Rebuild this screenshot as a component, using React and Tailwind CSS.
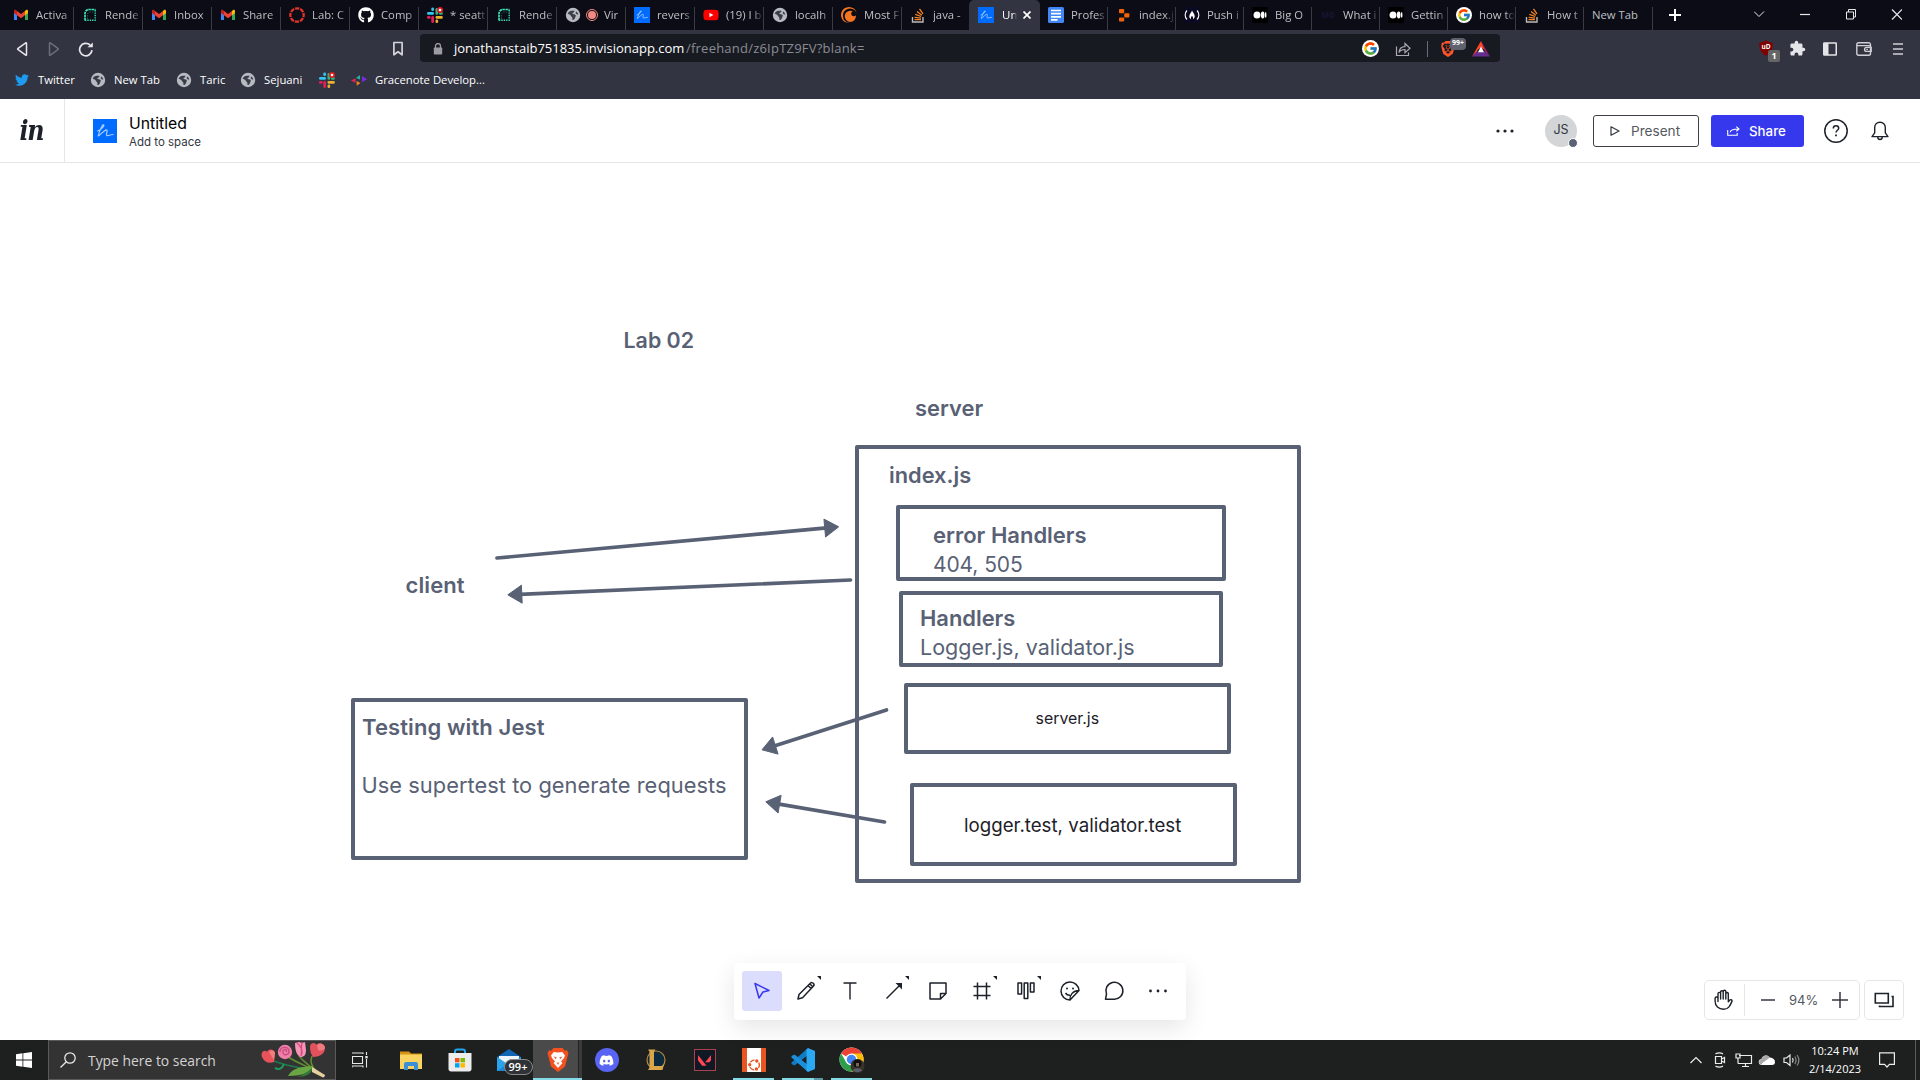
import { FaGithub, FaTwitter, FaDiscord, FaYoutube } from "react-icons/fa";
import { MdExtension } from "react-icons/md";
import { FcGoogle } from "react-icons/fc";
import { SiCrunchyroll, SiBrave, SiUbuntu, SiValorant } from "react-icons/si";

/* ---------- favicons ---------- */

function Gmail() {
  return (
    <svg viewBox="0 0 16 16" className="size-4">
      <path d="M1 4.2V13h3V7z" fill="#4285f4" />
      <path d="M15 4.2V13h-3V7z" fill="#34a853" />
      <path d="M1 4.2V6l3 2.3V4L3 3.1C2 2.500 1 3.100 1 4.200z" fill="#c5221f" />
      <path d="M12 4v4.300L15 6V4.200c0-1.100-1-1.700-2-1.100z" fill="#fbbc04" />
      <path d="M4 4l4 3 4-3v4.300l-4 3-4-3z" fill="#ea4335" />
    </svg>
  );
}

function RenderIcon() {
  return (
    <svg viewBox="0 0 16 16" className="size-4" fill="none">
      <path d="M3 13.500V6.500a4 4 0 0 1 4-4h6.500" stroke="#3fe0b0" strokeWidth="1.700" strokeDasharray="2.600 0.500" />
      <path d="M13.200 3v10.300H3" stroke="#3fe0b0" strokeWidth="1.400" strokeDasharray="1.400 1" />
      <path d="M5.500 12V7.500a2.500 2.500 0 0 1 2.500-2.500h3.500" stroke="#17564e" strokeWidth="1" strokeDasharray="1.500 1" />
    </svg>
  );
}

function CanvasIcon() {
  return (
    <svg viewBox="0 0 16 16" className="size-4" fill="none">
      <circle cx="8" cy="8" r="6.700" stroke="#e0352b" strokeWidth="2.300" strokeDasharray="4.260 1" strokeDashoffset="2.130" />
    </svg>
  );
}

function Slack() {
  return (
    <svg viewBox="0 0 16 16" className="size-4">
      <rect x="0" y="5" width="7" height="2.800" rx="1.400" fill="#36c5f0" />
      <rect x="4.300" y="0.500" width="2.700" height="3.600" rx="1.300" fill="#36c5f0" />
      <rect x="8.500" y="1" width="2.700" height="6.800" rx="1.300" fill="#2eb67d" />
      <rect x="12" y="5" width="3.800" height="2.800" rx="1.300" fill="#2eb67d" />
      <rect x="8.500" y="9" width="7.300" height="2.700" rx="1.300" fill="#ecb22e" />
      <rect x="8.500" y="12.500" width="2.700" height="3.500" rx="1.300" fill="#ecb22e" />
      <rect x="4.300" y="9" width="2.700" height="7" rx="1.300" fill="#e01e5a" />
      <rect x="0" y="9" width="3.600" height="2.700" rx="1.300" fill="#e01e5a" />
      <circle cx="13" cy="3" r="3" fill="#e3191e" />
      <circle cx="13" cy="3" r="1.300" fill="#fff" />
    </svg>
  );
}

function Globe() {
  return (
    <svg viewBox="0 0 16 16" className="size-4">
      <circle cx="8" cy="8" r="7.200" fill="#b7bac0" />
      <path d="M2.800 6.300C4.500 3.600 7 3.800 9.300 3.800c.4 1.500-1 2-1.800 2.100C7 7 8.500 7 9.800 7.400c1.800.5.700 2.100.4 3-.5 1.300-1.300 2.600-2.700 2.600-.3-1.300.200-2.200-.7-3C5.600 9 6 8.300 4.600 7.500c-.7-.4-1.800-.1-1.800-1.200z" fill="#3a3d49" />
      <path d="M11 4.600c1.200.5 2 1.700 2.300 2.900-1 .2-2-.4-2.600-1.300z" fill="#3a3d49" />
    </svg>
  );
}

function InvisionIcon({ className = "size-4" }) {
  return (
    <svg viewBox="0 0 24 24" className={className} fill="none">
      <rect width="24" height="24" fill="#006cff" />
      <path d="M4.200 11.500M10.900 6.200c0-.9-1.300-.4-2 1C7.700 9.500 5.700 14 5.200 17M4.500 12C7.500 11 10.800 8 10.900 6.200M5.200 17c2-.5 5.500-6 8.300-6.200 1.900.1-1 4.600.3 5.600 1.400.8 3-.9 6.400-.9" stroke="#a9cdff" strokeWidth="1.200" strokeLinecap="round" />
    </svg>
  );
}

function StackOverflow() {
  return (
    <svg viewBox="0 0 16 16" className="size-4" fill="none">
      <path d="M2.500 10v5h10.500v-5" stroke="#bcbbbb" strokeWidth="1.400" />
      <path d="M4.500 12.700h6.500M4.600 10.300l6.400.9M5.300 7.300l5.900 2.200M7 4.400l4.900 3.800M9.500 1.800l3.500 5.100" stroke="#f48024" strokeWidth="1.300" />
    </svg>
  );
}

function Docs() {
  return (
    <svg viewBox="0 0 16 16" className="size-4">
      <rect width="16" height="16" rx="1.500" fill="#4285f4" />
      <path d="M3 3.500h10M3 6.700h10M3 9.900h10M3 12.800h6.500" stroke="#fff" strokeWidth="1.700" />
    </svg>
  );
}

function Replit() {
  return (
    <svg viewBox="0 0 16 16" className="size-4" fill="#f26207">
      <rect x="3" y="2" width="5.200" height="4.200" rx="0.800" />
      <rect x="8.200" y="6.200" width="5.200" height="4.200" rx="0.800" />
      <rect x="3" y="10.400" width="5.200" height="4.200" rx="0.800" />
    </svg>
  );
}

function FreeCodeCamp() {
  return (
    <svg viewBox="0 0 16 16" className="size-4">
      <rect width="16" height="16" rx="2" fill="#0a0a23" />
      <path d="M3 3.500C.5 6 .5 10 3 12.500M13 3.500c2.500 2.500 2.500 6.500 0 9" stroke="#fff" strokeWidth="1.100" fill="none" />
      <path d="M8 3.500c.5 1.700 2.700 3.200 2.700 5.700 0 1.300-.8 2.500-1.700 3 .3-1.200.2-2-1-3.400-1.200 1.400-1.300 2.200-1 3.400-.9-.5-1.700-1.700-1.700-3C5.300 7 7.500 5.500 8 3.500z" fill="#fff" />
    </svg>
  );
}

function Medium() {
  return (
    <svg viewBox="0 0 16 16" className="size-4">
      <rect width="16" height="16" rx="1" fill="#000" />
      <circle cx="5" cy="8" r="3.500" fill="#fff" />
      <ellipse cx="10.700" cy="8" rx="1.800" ry="3.400" fill="#fff" />
      <ellipse cx="13.700" cy="8" rx="0.800" ry="3" fill="#fff" />
    </svg>
  );
}

function DimIcon() {
  return (
    <div className="flex size-4 items-center justify-center text-[8px] font-bold text-[#161634]">MG</div>
  );
}

function GoogleDisc() {
  return (
    <div className="flex size-4 items-center justify-center rounded-full bg-white">
      <FcGoogle className="size-[14px]" />
    </div>
  );
}

function Youtube() {
  return (
    <div className="relative flex size-4 items-center justify-center">
      <div className="absolute h-[6px] w-[6px] bg-white" />
      <FaYoutube className="relative size-4 text-[#ff0000]" />
    </div>
  );
}

/* ---------- tab strip ---------- */

const tabs = [
  [<Gmail />, "Activa"],
  [<RenderIcon />, "Rende"],
  [<Gmail />, "Inbox"],
  [<Gmail />, "Share"],
  [<CanvasIcon />, "Lab: C"],
  [<FaGithub className="size-4 text-white" />, "Comp"],
  [<Slack />, "* seatt"],
  [<RenderIcon />, "Rende"],
  [<Globe />, "Vir", true],
  [<InvisionIcon />, "revers"],
  [<Youtube />, "(19) I b"],
  [<Globe />, "localh"],
  [<SiCrunchyroll className="size-4 text-[#f47521]" />, "Most F"],
  [<StackOverflow />, "java -"],
];

const tabsAfter = [
  [<Docs />, "Profes"],
  [<Replit />, "index.j"],
  [<FreeCodeCamp />, "Push i"],
  [<Medium />, "Big O"],
  [<DimIcon />, "What i"],
  [<Medium />, "Gettin"],
  [<GoogleDisc />, "how to"],
  [<StackOverflow />, "How t"],
];

const fade = "overflow-hidden whitespace-pre [mask-image:linear-gradient(to_right,black_72%,transparent)]";

function Tab({ icon, title, width, rec }) {
  return (
    <div className={`${width} flex h-[23px] shrink-0 items-center border-r pb-[7px] pl-2`}>
      <div className="shrink-0">{icon}</div>
      {rec && (
        <div className="ml-[5px] flex size-3 shrink-0 items-center justify-center rounded-full border border-[#f28b82]">
          <div className="size-2 rounded-full bg-[#f28b82]" />
        </div>
      )}
      <div className={`${rec ? "ml-[6px]" : "ml-[7px]"} ${fade} w-full text-[11.300px] leading-4 text-[#bfc0c4]`}>{title}</div>
    </div>
  );
}

function TabStrip() {
  return (
    <div className="flex h-[30px] items-end bg-[#0b0c15] pl-[5px]">
      {tabs.map(([icon, title, rec], i) => (
        <Tab key={i} icon={icon} title={title} rec={rec} width={i === 13 ? "w-[67px] border-transparent" : "w-[69px] border-[#3b3c43]"} />
      ))}
      <div className="flex h-[30px] w-[71px] items-center rounded-t-[5px] bg-[#323442] pl-[9px]">
        <InvisionIcon />
        <div className={`${fade} ml-2 w-[15px] text-[11.500px] leading-4 text-white`}>Un</div>
        <svg viewBox="0 0 8 8" className="ml-[6px] size-2" stroke="#fff" strokeWidth="1.700"><path d="M.5.5l7 7M7.500.5l-7 7" /></svg>
      </div>
      {tabsAfter.map(([icon, title], i) => (
        <Tab key={i} icon={icon} title={title} width="w-[68px] border-[#3b3c43]" />
      ))}
      <div className="flex h-[23px] w-[69px] items-center border-r border-[#3b3c43] pb-[7px] pl-2 text-[11.300px] text-[#bfc0c4]">New Tab</div>
      <svg viewBox="0 0 12 12" className="mb-[9px] ml-[16px] size-3" stroke="#fff" strokeWidth="2"><path d="M6 0v12M0 6h12" /></svg>
      <svg viewBox="0 0 148 12" className="mb-[10px] ml-[73px] h-3 w-[148px]" fill="none" stroke="#e8e8ea" strokeWidth="1.200">
        <path d="M0 3.500l5 5 5-5" strokeWidth="1" />
        <path d="M46 6.500h10" />
        <path d="M92.500 4h7v7h-7zM94.500 4V1.500h7V9H99.500" strokeWidth="1" />
        <path d="M138 1.500l10 10M148 1.500l-10 10" />
      </svg>
    </div>
  );
}

/* ---------- navigation ---------- */

function Shield() {
  return (
    <div className="relative h-[22px] w-[22px]">
      <svg viewBox="0 0 16 16" className="size-4"><path d="M8 .3l2 1.200L14.700 3c.2 6-1.200 9.500-6.700 12.700C2.500 12.500 1.100 9 1.300 3L6 1.500z" fill="#800000" /></svg>
      <div className="absolute left-0 top-[3px] w-4 text-center text-[6.500px] font-bold leading-[8px] text-white">uD</div>
      <div className="absolute left-[10px] top-[10px] flex h-3 w-3 items-center justify-center rounded-[2px] bg-[#666] text-[9px] font-bold text-white">1</div>
    </div>
  );
}

function NavBar() {
  return (
    <div className="flex h-9 items-center bg-[#323442] pt-px">
      <svg viewBox="0 0 80 16" className="ml-[16px] h-4 w-20" fill="none" strokeWidth="1.500" strokeLinejoin="round">
        <path d="M10.500 2.200v11.600c0 .5-.5.5-.8.300L1.800 8.400a.5.5 0 0 1 0-.8l7.900-5.700c.3-.2.8-.2.8.3z" stroke="#e6e7ea" />
        <path d="M33.500 2.200v11.600c0 .5.5.5.8.300l7.900-5.700a.5.5 0 0 0 0-.8l-7.900-5.700c-.3-.2-.8-.2-.8.300z" stroke="#6c6e79" />
        <path d="M74 4a6.200 6.200 0 1 0 2 5.200" stroke="#e6e7ea" strokeWidth="1.700" />
        <path d="M71.500 6.300h5.300V1.400z" fill="#e6e7ea" />
      </svg>
      <svg viewBox="0 0 12 16" className="ml-[296px] h-4 w-3" fill="none" stroke="#d3d4d9" strokeWidth="1.700"><path d="M1.900 1.500h8.200v12.300L6 10.700l-4.100 3.100z" strokeLinejoin="round" /></svg>
      <div className="-mt-px ml-[16px] flex h-7 w-[1080px] items-center rounded-[4px] bg-[#181a21] pt-px text-[13px]">
        <svg viewBox="0 0 10 12" className="ml-[13px] h-3 w-[10px]"><rect x="0.800" y="4.500" width="8.400" height="7" rx="0.800" fill="#9b9ca3" /><path d="M2.500 5V3a2.500 2.500 0 0 1 5 0v2" stroke="#9b9ca3" strokeWidth="1.300" fill="none" /></svg>
        <div className="ml-[11px] w-[232px] whitespace-nowrap text-white">jonathanstaib751835.invisionapp.com</div>
        <div className="w-[676px] whitespace-nowrap tracking-[0.22px] text-[#8b8d94]">/freehand/z6IpTZ9FV?blank=</div>
        <div className="flex size-[17px] shrink-0 items-center justify-center rounded-full bg-white"><FcGoogle className="size-[15px]" /></div>
        <svg viewBox="0 0 16 16" className="ml-[16px] size-4" fill="none" stroke="#a9abb1" strokeWidth="1.200"><path d="M1.500 5.500v9h12v-3M4 11.500C4.500 7 7 5.700 10 5.700V2.500l5 4.700-5 4.500V8.500c-2.500 0-4.500.5-6 3z" /></svg>
        <div className="ml-[16px] h-4 w-px bg-[#6a6c75]" />
        <div className="relative ml-[12px] flex h-4 w-[14px] items-center">
          <SiBrave className="h-[18px] w-[16px] shrink-0 text-[#fb542b]" />
          <div className="absolute -top-[3px] left-[10px] flex h-3 w-4 items-center justify-center rounded-[4px] bg-[#5f626e] text-[7px] font-bold text-white">99+</div>
        </div>
        <svg viewBox="0 0 18 16" className="ml-[18px] h-4 w-[18px]"><path d="M9 0l4.500 9.500-4.500-3-4.500 3z" fill="#ff4724" /><path d="M9 0L0 15.500l5-5z" fill="#ff4724" /><path d="M9 0l9 15.500-5-5z" fill="#9e1f63" /><path d="M0 15.500h18l-5-5H5z" fill="#662d91" /><path d="M9 5.500l3 5.700H6z" fill="#fff" /></svg>
      </div>
      <div className="mt-[4px] ml-[258px]"><Shield /></div>
      <MdExtension className="ml-[9px] size-[17px] text-[#e4e5e8]" />
      <svg viewBox="0 0 14 14" className="ml-[17px] size-[14px]"><rect x="0.750" y="1" width="12.500" height="12" fill="none" stroke="#e4e5e8" strokeWidth="1.500" rx="0.500" /><rect x="1" y="1" width="4.500" height="12" fill="#e4e5e8" /></svg>
      <svg viewBox="0 0 16 14" className="ml-[19px] h-[14px] w-4" fill="none" stroke="#cfd0d5" strokeWidth="1.400"><path d="M14.500 3.500V2.700c0-1-.7-1.900-1.700-1.900H2.700C1.700.8.8 1.700.8 2.700v8.500c0 1 .9 2 1.900 2h10.100c1 0 1.700-1 1.700-2M1 3.600h13.500v7.600M15.200 5.400h-4.600a2 2 0 0 0 0 4h4.600z" /><path d="M10.300 7.400h1.600" /></svg>
      <svg viewBox="0 0 10 12" className="ml-[21px] h-3 w-[10px]" stroke="#cfd0d5" strokeWidth="1.500"><path d="M0 1h10M0 6h10M0 11h10" /></svg>
    </div>
  );
}

function Bookmarks() {
  return (
    <div className="flex h-[33px] items-start bg-[#323442] pt-[6px] pl-[15px] text-[11.300px] leading-4 text-white">
      <FaTwitter className="mt-px size-[14px] text-[#1d9bf0]" />
      <div className="ml-[9px] w-[52px]">Twitter</div>
      <Globe />
      <div className="ml-[8px] w-[62px] whitespace-nowrap">New Tab</div>
      <Globe />
      <div className="ml-[8px] w-[40px]">Taric</div>
      <Globe />
      <div className="ml-[8px] w-[55px]">Sejuani</div>
      <Slack />
      <svg viewBox="0 0 16 16" className="ml-[16px] size-4"><path d="M0 8.500l4.500-2.200v4.500z" fill="#e8264f" /><path d="M5 6l4-3v4.600z" fill="#1fb6a6" /><path d="M5.500 9l4 2-3.700 2.700z" fill="#f58220" /><path d="M11 4l5 3.200-5 3z" fill="#7a2be2" /></svg>
      <div className="ml-[8px] whitespace-nowrap">Gracenote Develop...</div>
    </div>
  );
}

/* ---------- app header ---------- */

function Header() {
  return (
    <div className="flex h-16 shrink-0 items-center border-b border-[#e6e6e8] bg-white font-['Inter',sans-serif]">
      <div className="flex h-full w-[65px] items-center justify-center border-r border-[#e6e6e8]">
        <div className="-ml-[2px] origin-center scale-x-[0.88] font-['DejaVu_Serif',serif] text-[27px] font-bold italic leading-none tracking-[-1.500px] text-[#1d2129]">in</div>
      </div>
      <InvisionIcon className="ml-[28px] size-6" />
      <div className="ml-3 w-[1367px] pt-[4px]">
        <div className="text-[15.800px] leading-5 text-black">Untitled</div>
        <div className="text-[11.500px] leading-[17px] text-[#33373f]">Add to space</div>
      </div>
      <svg viewBox="0 0 18 4" className="h-1 w-[18px]" fill="#1d2129"><circle cx="2" cy="2" r="1.600" /><circle cx="9" cy="2" r="1.600" /><circle cx="16" cy="2" r="1.600" /></svg>
      <div className="relative ml-[31px] flex size-8 items-center justify-center rounded-full bg-[#d4d5d7] text-[12.500px] text-[#33373f]">
        JS
        <div className="absolute -right-px -bottom-px size-[10px] rounded-full border border-white bg-[#596275]" />
      </div>
      <div className="ml-[16px] flex h-8 w-[106px] items-center rounded-[3px] border border-[#3c3f46] pl-[16px] text-[13.600px] text-[#55585f]">
        <svg viewBox="0 0 10 10" className="mr-[11px] size-[10px]" fill="none" stroke="#33373f" strokeWidth="1.200" strokeLinejoin="round"><path d="M1 .8l8 4.200-8 4.200z" /></svg>
        <span className="pt-px">Present</span>
      </div>
      <div className="ml-[12px] flex h-8 w-[93px] items-center rounded-[3px] bg-[#3538ed] pl-[16px] text-[13.300px] font-medium text-white">
        <svg viewBox="0 0 13 10" className="mr-[9px] h-[10px] w-[13px]" fill="none" stroke="#fff" strokeWidth="1.100"><path d="M.7 4v5.200h9.500V7M3.200 6.200C3.500 3.500 6 3 11.500 3M9.300.6L12 3 9.300 5.400" /></svg>
        <span className="pt-0.5">Share</span>
      </div>
      <svg viewBox="0 0 24 24" className="ml-5 size-6" fill="none" stroke="#1d2129" strokeWidth="1.500"><circle cx="12" cy="12" r="11.200" /><path d="M9.300 9.500c0-1.700 1.100-2.700 2.700-2.700s2.700 1 2.700 2.400c0 2-2.700 2.100-2.700 4.300" /><path d="M12 15.500v1.800" strokeWidth="1.800" /></svg>
      <svg viewBox="0 0 18 20" className="ml-[23px] h-5 w-[18px]" fill="none" stroke="#1d2129" strokeWidth="1.400" strokeLinejoin="round"><path d="M9 1.200c-3.200 0-5.300 2.300-5.300 5.400v5.200L1 15.600h16l-2.700-3.800V6.600c0-3.100-2.100-5.400-5.300-5.400z" /><path d="M6.800 16c0 1.300 1 2.500 2.200 2.500s2.200-1.200 2.200-2.500" /></svg>
    </div>
  );
}

/* ---------- freehand board ---------- */

const boxes = [
  [351, 535, 397, 162],
  [855, 282, 446, 438],
  [896, 342, 330, 76],
  [899, 428, 324, 76],
  [904, 520, 327, 71],
  [910, 620, 327, 83],
];

const arrows = [
  [497, 395, 838.7, 363.800],
  [850.500, 417, 507.800, 431.800],
  [886.500, 547, 762, 586.800],
  [884.500, 659, 765.800, 638.800],
];

function Arrow({ line: [x1, y1, x2, y2] }) {
  const len = Math.hypot(x2 - x1, y2 - y1);
  const ux = (x2 - x1) / len;
  const uy = (y2 - y1) / len;
  const bx = x2 - ux * 14;
  const by = y2 - uy * 14;
  return (
    <g>
      <path d={`M${x1} ${y1}L${bx + ux * 2} ${by + uy * 2}`} strokeWidth="3.700" strokeLinecap="round" />
      <path d={`M${x2} ${y2}L${bx - uy * 9} ${by + ux * 9}L${bx + uy * 9} ${by - ux * 9}z`} strokeWidth="1" strokeLinejoin="round" />
    </g>
  );
}

const notes = [
  ["Lab 02", 623.500, 163, "text-[21.400px] font-semibold"],
  ["server", 915, 231, "text-[21.900px] font-semibold"],
  ["index.js", 889, 298, "text-[21.800px] font-semibold"],
  ["error Handlers", 933, 358, "text-[22px] font-semibold"],
  ["404, 505", 933, 387, "text-[21px] tracking-[-0.1px]"],
  ["Handlers", 920, 441, "text-[21.900px] font-semibold"],
  ["Logger.js, validator.js", 920, 470, "text-[21.500px]"],
  ["Testing with Jest", 362, 550, "text-[22px] font-semibold tracking-[0.1px]"],
  ["Use supertest to generate requests", 361.500, 608, "text-[21.800px] tracking-[0.05px]"],
  ["client", 405.500, 408, "text-[22px] font-semibold tracking-[0.1px]"],
  ["server.js", 1035.500, 541, "text-[15.900px] text-[#1d2129]"],
  ["logger.test, validator.test", 964, 647.500, "text-[18.700px] text-[#1d2129]"],
];

function Board() {
  return (
    <div className="relative flex-1 bg-white font-['Inter',sans-serif] text-[#596175]">
      {boxes.map(([x, y, w, h], i) => (
        <div key={i} className="absolute rounded-[2px] border-4 border-[#596175]" style={{ left: x, top: y, width: w, height: h }} />
      ))}
      <svg viewBox="0 0 1920 877" className="absolute inset-0 h-[877px] w-[1920px]" stroke="#596175" fill="#596175">
        {arrows.map((a, i) => <Arrow key={i} line={a} />)}
      </svg>
      {notes.map(([text, x, y, cls]) => (
        <div key={text} className={`absolute whitespace-nowrap leading-[29px] ${cls}`} style={{ left: x, top: y }}>{text}</div>
      ))}
      <Toolbar />
      <ZoomControls />
    </div>
  );
}

function Caret() {
  return <svg viewBox="0 0 4 4" className="absolute top-[5px] right-[5px] size-1" fill="#1d2129"><path d="M0 0h4v4z" /></svg>;
}

const tools = [
  [<><path d="M5 4.500l14 7-6 1.500-4 6z" /></>, false],
  [<><path d="M4 20l1-4.500L16.300 4.300c1-1 2.200-.8 3 0s1 2 0 3L8.500 18.800zM14 6.500l3.300 3.300M15.800 4.800l3.200 3.200" /></>, true],
  [<><path d="M5.500 4h13M12 4v16.500" strokeWidth="1.400" /></>, false],
  [<><path d="M4.500 19.500L19 5" /><path d="M13.500 4h6.500v6.500z" fill="currentColor" stroke="none" /></>, true],
  [<><path d="M4 4h16v10.500L14.500 20H4zM20 14.500h-5.500V20" /></>, false],
  [<><path d="M7.500 3.500v17M16.500 3.500v17M3.500 7.500h17M3.500 16.500h17" /></>, true],
  [<><path d="M4 4h3.600v11H4zM10.200 4h3.600v15.500h-3.600zM16.400 4H20v9h-3.600z" /></>, true],
  [<><path d="M21 11.500A9 9 0 1 0 12 21zM12 21c-.5-5 3-9.500 9-9.500" /><path d="M7.500 14c1 1.600 2.300 2.300 4.500 2.200" /><circle cx="9" cy="9.500" r="1" fill="currentColor" stroke="none" /><circle cx="15" cy="9.500" r="1" fill="currentColor" stroke="none" /></>, false],
  [<><path d="M3.500 20.300l1-5.300a8.500 8.500 0 1 1 7.600 5.300z" /></>, false],
  [<><g fill="currentColor" stroke="none"><circle cx="4.500" cy="12" r="1.400" /><circle cx="12" cy="12" r="1.400" /><circle cx="19.500" cy="12" r="1.400" /></g></>, false],
];

function Toolbar() {
  return (
    <div className="absolute left-[734px] top-[800px] flex h-[57px] gap-1 rounded-[4px] bg-white px-2 pt-2 shadow-[0_8px_24px_rgba(0,0,0,0.1)]">
      {tools.map(([shape, caret], i) => (
        <div key={i} className={`relative flex size-10 items-center justify-center rounded-[3px] ${i === 0 ? "bg-[#dcdcfd] text-[#3538ed]" : "text-[#1d2129]"}`}>
          <svg viewBox="0 0 24 24" className="size-6" fill="none" stroke="currentColor" strokeWidth="1.500" strokeLinejoin="round">{shape}</svg>
          {caret && <Caret />}
        </div>
      ))}
    </div>
  );
}

function ZoomControls() {
  return (
    <div className="absolute left-[1704px] top-[817px] flex gap-1 text-[#1d2129]">
      <div className="flex h-10 w-[156px] items-center rounded-[5px] border border-[#e6e6e8] bg-white">
        <div className="flex h-8 w-10 items-center justify-center border-r border-[#e6e6e8] pr-1">
          <svg viewBox="0 0 20 22" className="h-[22px] w-5" fill="none" stroke="currentColor" strokeWidth="1.400" strokeLinejoin="round" strokeLinecap="round"><path d="M5 12.500V4.700a1.300 1.300 0 0 1 2.600 0V3a1.300 1.300 0 0 1 2.600 0v-.500a1.300 1.300 0 0 1 2.600 0V4.500a1.300 1.300 0 0 1 2.500 0v8.300l1.300-1.600c.8-1 2.500-.5 2.500.8-1.500 3.500-3 8.300-8.500 8.300-5 0-8.500-3.300-8.500-8.300V9.500a1.400 1.400 0 0 1 2.900 0zM7.600 4.500V10M10.200 3v7M12.800 4.500V10" /></svg>
        </div>
        <svg viewBox="0 0 14 2" className="ml-[16px] h-[2px] w-[14px]"><path d="M0 1h14" stroke="#33373f" strokeWidth="1.500" /></svg>
        <div className="ml-[14px] w-[43px] pt-px text-[13px] text-[#55585f]">94%</div>
        <svg viewBox="0 0 16 16" className="size-4"><path d="M0 8h16M8 0v16" stroke="#33373f" strokeWidth="1.500" /></svg>
      </div>
      <div className="flex size-10 items-center justify-center rounded-[5px] border border-[#e6e6e8] bg-white">
        <svg viewBox="0 0 20 16" className="h-4 w-5" fill="none" stroke="currentColor" strokeWidth="1.600"><path d="M1.300 1.500h13v9.500h-13zM17.500 4.500H19v10H5.500V13.500" /></svg>
      </div>
    </div>
  );
}

/* ---------- taskbar ---------- */

function Bouquet() {
  return (
    <svg viewBox="0 0 66 38" className="h-[38px] w-[66px]">
      <path d="M13 20C28 26 42 27 55 30" stroke="#1f7a4d" strokeWidth="1.600" fill="none" />
      <path d="M27 16c8 5 18 9 28 14M38 15c4 5 10 9 17 16M51 15c-2 5-1 10 4 15" stroke="#5f8f2f" strokeWidth="1.500" fill="none" />
      <path d="M14 27c4 2 7 1 9-4" stroke="#1f9a5d" strokeWidth="2" fill="none" />
      <path d="M27 35c5-9 14-9 25-10-3 6-9 10-25 10z" fill="#6aa544" />
      <path d="M35 36c6-1 10-4 16-9 0 6-6 9-16 9z" fill="#2f7a3b" />
      <path d="M51 26l13 8c0 2-2 3-3 2l-10-5z" fill="#e8cfa0" />
      <path d="M1 16c-2-5 3-8 5-5 1-4 8-3 8 1l-1 9C8 23 3 21 1 16z" fill="#e8535a" />
      <path d="M14 12c-1-3-4-3-6-1l5 8z" fill="#f08080" />
      <circle cx="24" cy="11" r="7.200" fill="#ee7fa8" />
      <path d="M19 11c0-6 9-6 9-1 0 5-7 5-6 0 1-3 5-1 3 1" stroke="#c94a7e" strokeWidth="1.300" fill="none" />
      <path d="M34 2l4-1 3 1 3-1 1 8c0 5-2 7-5 7-4-1-6-6-6-14z" fill="#f495b5" />
      <path d="M36 2c5 4 6 9 4 13M41 1c-1 4 0 8-1 14" stroke="#d7487f" strokeWidth="1.200" fill="none" />
      <path d="M49 6c0-5 5-5 7-2 2-3 8-1 8 3 0 6-6 9-12 9-2-3-3-6-3-10z" fill="#e2525c" />
      <path d="M56 4c2-3 8-1 8 3-2 3-5 3-7 2z" fill="#f07a80" />
    </svg>
  );
}

function Explorer() {
  return (
    <svg viewBox="0 0 24 24" className="size-6"><path d="M1 3.500h9l2 2h11v15H1z" fill="#d79314" /><path d="M1 6.500h22V21H1z" fill="#fbd361" /><path d="M5 22v-6c0-1 .5-2 2-2h10c1.500 0 2 1 2 2v6h-4v-4H9v4z" fill="#3b8fd6" /></svg>
  );
}

function Store() {
  return (
    <svg viewBox="0 0 24 24" className="size-6"><path d="M7 6V3.500C7 2 7.700 1.500 9 1.500h6c1.300 0 2 .5 2 2V6" fill="none" stroke="#23a4ec" strokeWidth="2" /><path d="M.5 5h23v16c0 1.500-1 2.500-2.500 2.500H3C1.500 23.500.5 22.500.5 21z" fill="#ececec" /><path d="M7 10h4.500v4.300H7z" fill="#f25022" /><path d="M12.500 10H17v4.300h-4.500z" fill="#7fba00" /><path d="M7 15.200h4.500v4.300H7z" fill="#00a4ef" /><path d="M12.500 15.200H17v4.300h-4.500z" fill="#ffb900" /></svg>
  );
}

function Mail() {
  return (
    <div className="relative size-6">
      <svg viewBox="0 0 24 24" className="size-6"><path d="M0 9l12-8 12 8v14H0z" fill="#1066b5" /><path d="M2 8h20v8H2z" fill="#eef4fa" /><path d="M0 9l12 8 12-8v14H0z" fill="#2aa3ea" /><path d="M0 23l12-8 12 8z" fill="#1b86d3" /></svg>
      <div className="absolute left-[7px] top-[11px] flex h-4 w-[29px] items-center justify-center rounded-full border border-[#8a8a8a] bg-[#2f3236] text-[11px] font-semibold text-white">99+</div>
    </div>
  );
}

function League() {
  return (
    <svg viewBox="0 0 24 24" className="size-6"><circle cx="12" cy="12" r="9" fill="#0c2a3d" stroke="#b98a3c" strokeWidth="1.200" /><path d="M4 1.500h7.500L10 3.700V18h7.500l2.500-1.500-1.500 5.500H4l1.500-2.500V3.700z" fill="#d9a54a" /></svg>
  );
}

function Ubuntu() {
  return (
    <div className="flex size-6 items-end justify-center border-x-[5px] border-[#e95420] bg-white pb-px"><SiUbuntu className="size-3 shrink-0 text-[#e95420]" /></div>
  );
}

function VSCode() {
  return (
    <svg viewBox="0 0 24 24" className="size-6"><path d="M17 0v7L3.500 17.500 0.500 16v-1.500z" fill="#0f7cc4" /><path d="M17 24v-7L3.500 6.500 0.500 8v1.500z" fill="#1a90dc" /><path d="M17 0l7 3v18l-7 3-1.500-1.500V1.500z" fill="#2aa9f5" /></svg>
  );
}

function Chrome() {
  return (
    <svg viewBox="0 0 26 26" className="size-[26px]">
      <circle cx="12.500" cy="12.500" r="12" fill="#fff" />
      <path d="M12.500 12.500L2.100 6.500A12 12 0 0 1 22.900 6.500z" fill="#ea4335" />
      <path d="M12.500 6.500h10.400a12 12 0 0 1-10.400 18l5.200-9z" fill="#fbbc04" />
      <path d="M2.100 6.500a12 12 0 0 0 10.400 18l5.200-9-10.400 0z" fill="#2e9e4b" />
      <circle cx="12.500" cy="12.500" r="6" fill="#fff" />
      <circle cx="12.500" cy="12.500" r="4.700" fill="#4285f4" />
      <circle cx="18.500" cy="19" r="7" fill="#39332b" />
      <circle cx="18.500" cy="16.500" r="4" fill="#12100f" />
      <path d="M17 16h3v3c-1 1-2 1-3 0z" fill="#7d6455" />
      <path d="M14 23.500c1-3 8-3 9 0a7 7 0 0 1-9 0z" fill="#59606b" />
    </svg>
  );
}

function BraveTile() {
  return (
    <svg viewBox="0 0 22 24" className="h-6 w-[22px]">
      <path d="M6.500 0h9l2.300 2.700L20 2.300l1.500 3L20.700 8 18 18.500 11 24 4 18.500 1.300 8 .5 5.300l1.500-3 2.200.4z" fill="#f4511e" />
      <path d="M11 4.500l4.300-.5 2.700 3.500-1 2.500-3 3.500 1.500 1.500-4.500 5-4.500-5L8 13.500 5 10 4 7.500 6.700 4z" fill="#fff" />
      <path d="M6.500 8.500l3 .800-.5 2zM15.500 8.500l-3 .8.5 2zM9.500 14l1.500 1 1.500-1-1.500 3z" fill="#f4511e" />
    </svg>
  );
}

const apps = [
  [<Explorer />],
  [<Store />],
  [<Mail />],
  [<BraveTile />, "active"],
  [<div className="flex size-6 items-center justify-center rounded-full bg-[#5865f2]"><FaDiscord className="size-[15px] text-white" /></div>],
  [<League />],
  [<div className="flex size-[22px] items-center justify-center border border-[#a8434e] bg-[#101823]"><SiValorant className="size-[13px] text-[#ff4655]" /></div>],
  [<Ubuntu />, "open"],
  [<VSCode />, "stack"],
  [<Chrome />, "open"],
];

function AppSlot({ icon, state }) {
  return (
    <div className={`relative flex h-10 w-[49px] shrink-0 items-center justify-center ${state === "active" ? "bg-[#4a4a4a]" : ""}`}>
      {icon}
      {state === "active" && <div className="absolute inset-y-0 right-0 w-1 border-l border-[#222] bg-[#3a3a3a]" />}
      {state === "active" && <div className="absolute inset-x-0 bottom-0 h-[2px] bg-[#84dbe6]" />}
      {(state === "open" || state === "stack") && <div className="absolute inset-x-1 bottom-0 h-[2px] bg-[#84dbe6]" />}
      {state === "stack" && <div className="absolute right-1 bottom-0 h-[2px] w-[9px] bg-[#5b9aa2]" />}
    </div>
  );
}

function Taskbar() {
  return (
    <div className="flex h-10 shrink-0 items-center bg-[#1e1f1f]">
      <svg viewBox="0 0 16 16" className="mx-4 size-4" fill="#fff"><path d="M0 2.200l6.500-.9v6.300H0zM7.300 1.200L16 0v7.600H7.300zM0 8.400h6.500v6.300L0 13.800zM7.300 8.400H16V16l-8.700-1.200z" /></svg>
      <div className="flex h-10 w-72 items-center border border-[#5a5a5a] bg-[#333]">
        <svg viewBox="0 0 16 16" className="ml-[11px] size-4" fill="none" stroke="#e8e8e8" strokeWidth="1.300"><circle cx="10" cy="6" r="5.200" /><path d="M6.300 9.700L.5 15.500" /></svg>
        <div className="ml-[12px] w-[173px] pt-[2px] text-[13.900px] text-[#d3d3d3]">Type here to search</div>
        <Bouquet />
      </div>
      <svg viewBox="0 0 16 16" className="ml-[16px] size-4" fill="none" stroke="#e8e8e8" strokeWidth="1.100"><path d="M.5 4.500h10v7H.5zM0 1.500V1h11v1M0 15.500V14h11v1.500M14.500 0v3M14.500 7v8.500" /><path d="M13.300 4h2.400v2.400h-2.400z" fill="#e8e8e8" stroke="none" /></svg>
      <div className="ml-[18px] flex w-[1304px]">
        {apps.map(([icon, state], i) => <AppSlot key={i} icon={icon} state={state} />)}
      </div>
      <svg viewBox="0 0 110 16" className="h-4 w-[110px]" fill="none" stroke="#ececec" strokeWidth="1.200">
        <path d="M.5 11L6 5.500 11.500 11" />
        <path d="M25.500 4.500h6v7h-6zM31.500 7l3-1.500v5l-3-1.500M25.500 2c2-1.500 5.500-1.500 7.500 0M25.500 14c2 1.500 5.500 1.500 7.500 0" />
        <path d="M49 3.500h12.500v8H48M52 14.500h7M55.500 11.500v3M46 2h4v4h-4zM48 6v5.500" />
        <g stroke="none"><path d="M72 13a3 3 0 0 1-.5-6c.5-3 5-5.500 8.500-1.500 3 .3 5 2 5 4.500 0 2-1 3-3 3z" fill="#fff" /><path d="M71.500 7c.5-3 5-5.500 8.500-1.500l-7 5-2 2.400c-2.500-1-2.500-5.400.5-5.900z" fill="#a9a9a9" /></g>
        <path d="M94 6h2.500L100 3v10.500L96.500 10.500H94z" />
        <path d="M102.500 6c1 1.500 1 3 0 4.500" /><path d="M104.800 4.500c1.700 2.500 1.700 5 0 7.500M107 3c2.500 3.500 2.500 7 0 10.500" stroke="#8a8a8a" />
      </svg>
      <div className="ml-[8px] w-[54px] text-center text-[11px] leading-[18px] text-white">
        <div className="whitespace-nowrap">10:24 PM</div>
        <div className="whitespace-nowrap">2/14/2023</div>
      </div>
      <svg viewBox="0 0 16 16" className="ml-[17px] size-4" fill="none" stroke="#ececec" strokeWidth="1.200"><path d="M.6.8h14.800v11.500H10.500L8 15l-2.500-2.700H.6z" /></svg>
      <div className="ml-[20px] h-10 w-px bg-[#5a5a5a]" />
    </div>
  );
}

export default function App() {
  return (
    <div className="flex h-[1080px] w-[1920px] flex-col overflow-hidden bg-white font-['Open_Sans',sans-serif]">
      <TabStrip />
      <NavBar />
      <Bookmarks />
      <Header />
      <Board />
      <Taskbar />
    </div>
  );
}
